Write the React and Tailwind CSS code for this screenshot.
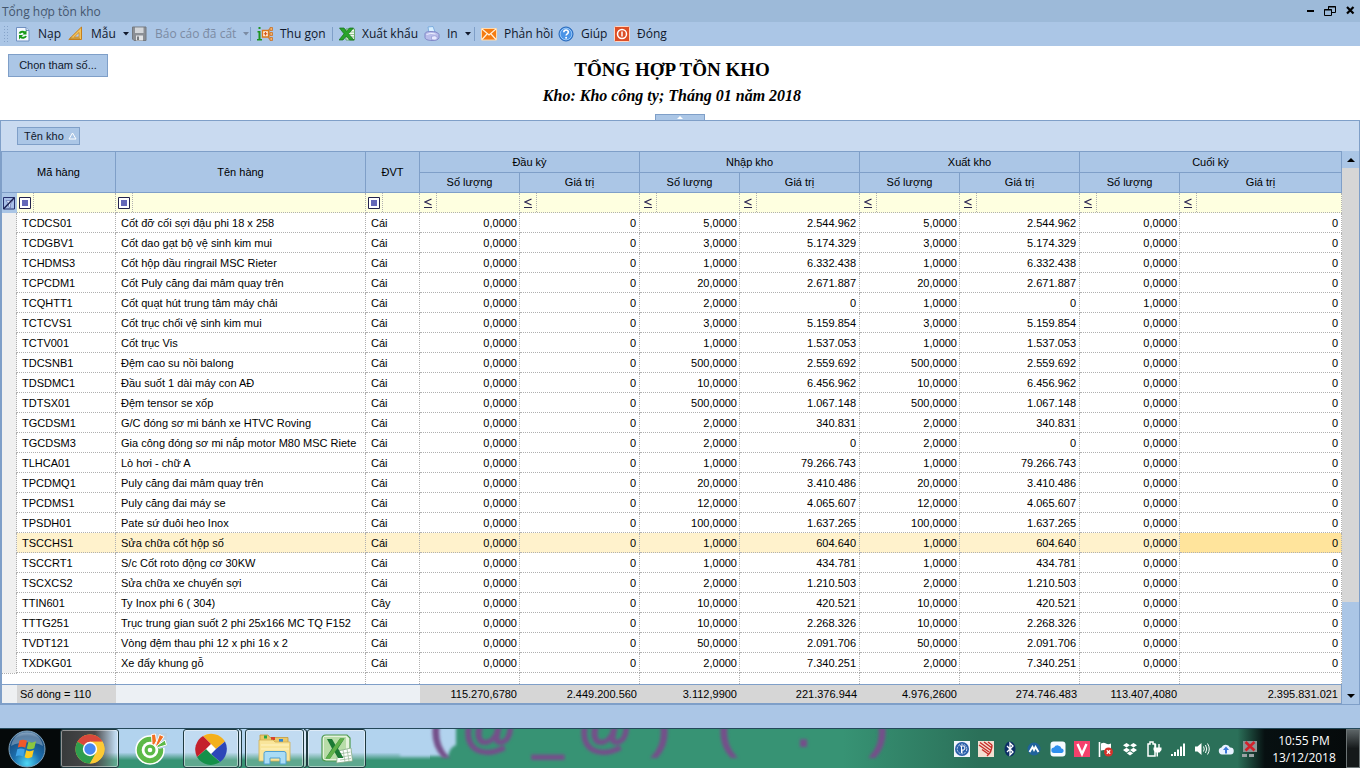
import React from "react";

const ROWS = [
  ["TCDCS01", "Cốt đỡ cối sợi đậu phi 18 x 258", "Cái", "0,0000", "0", "5,0000", "2.544.962", "5,0000", "2.544.962", "0,0000", "0"],
  ["TCDGBV1", "Cốt dao gạt bộ vệ sinh kim mui", "Cái", "0,0000", "0", "3,0000", "5.174.329", "3,0000", "5.174.329", "0,0000", "0"],
  ["TCHDMS3", "Cốt hộp dầu ringrail MSC Rieter", "Cái", "0,0000", "0", "1,0000", "6.332.438", "1,0000", "6.332.438", "0,0000", "0"],
  ["TCPCDM1", "Cốt Puly căng đai mâm quay trên", "Cái", "0,0000", "0", "20,0000", "2.671.887", "20,0000", "2.671.887", "0,0000", "0"],
  ["TCQHTT1", "Cốt quạt hút trung tâm máy chải", "Cái", "0,0000", "0", "2,0000", "0", "1,0000", "0", "1,0000", "0"],
  ["TCTCVS1", "Cốt trục chổi vệ sinh kim mui", "Cái", "0,0000", "0", "3,0000", "5.159.854", "3,0000", "5.159.854", "0,0000", "0"],
  ["TCTV001", "Cốt trục Vis", "Cái", "0,0000", "0", "1,0000", "1.537.053", "1,0000", "1.537.053", "0,0000", "0"],
  ["TDCSNB1", "Đệm cao su nồi balong", "Cái", "0,0000", "0", "500,0000", "2.559.692", "500,0000", "2.559.692", "0,0000", "0"],
  ["TDSDMC1", "Đầu suốt 1 dài máy con AĐ", "Cái", "0,0000", "0", "10,0000", "6.456.962", "10,0000", "6.456.962", "0,0000", "0"],
  ["TDTSX01", "Đệm tensor se xốp", "Cái", "0,0000", "0", "500,0000", "1.067.148", "500,0000", "1.067.148", "0,0000", "0"],
  ["TGCDSM1", "G/C đóng sơ mi bánh xe HTVC Roving", "Cái", "0,0000", "0", "2,0000", "340.831", "2,0000", "340.831", "0,0000", "0"],
  ["TGCDSM3", "Gia công đóng sơ mi nắp motor M80 MSC Riete", "Cái", "0,0000", "0", "2,0000", "0", "2,0000", "0", "0,0000", "0"],
  ["TLHCA01", "Lò hơi - chữ A", "Cái", "0,0000", "0", "1,0000", "79.266.743", "1,0000", "79.266.743", "0,0000", "0"],
  ["TPCDMQ1", "Puly căng đai mâm quay trên", "Cái", "0,0000", "0", "20,0000", "3.410.486", "20,0000", "3.410.486", "0,0000", "0"],
  ["TPCDMS1", "Puly căng đai máy se", "Cái", "0,0000", "0", "12,0000", "4.065.607", "12,0000", "4.065.607", "0,0000", "0"],
  ["TPSDH01", "Pate sứ đuôi heo Inox", "Cái", "0,0000", "0", "100,0000", "1.637.265", "100,0000", "1.637.265", "0,0000", "0"],
  ["TSCCHS1", "Sửa chữa cốt hộp số", "Cái", "0,0000", "0", "1,0000", "604.640", "1,0000", "604.640", "0,0000", "0"],
  ["TSCCRT1", "S/c Cốt roto động cơ 30KW", "Cái", "0,0000", "0", "1,0000", "434.781", "1,0000", "434.781", "0,0000", "0"],
  ["TSCXCS2", "Sửa chữa xe chuyển sợi", "Cái", "0,0000", "0", "2,0000", "1.210.503", "2,0000", "1.210.503", "0,0000", "0"],
  ["TTIN601", "Ty Inox phi 6 ( 304)", "Cây", "0,0000", "0", "10,0000", "420.521", "10,0000", "420.521", "0,0000", "0"],
  ["TTTG251", "Trục trung gian suốt 2 phi 25x166 MC TQ F152", "Cái", "0,0000", "0", "10,0000", "2.268.326", "10,0000", "2.268.326", "0,0000", "0"],
  ["TVDT121", "Vòng đệm thau phi 12 x phi 16 x 2", "Cái", "0,0000", "0", "50,0000", "2.091.706", "50,0000", "2.091.706", "0,0000", "0"],
  ["TXDKG01", "Xe đẩy khung gỗ", "Cái", "0,0000", "0", "2,0000", "7.340.251", "2,0000", "7.340.251", "0,0000", "0"],
];

const SELECTED = "TSCCHS1";

const TOTALS = ["115.270,6780", "2.449.200.560", "3.112,9900", "221.376.944", "4.976,2600", "274.746.483", "113.407,4080", "2.395.831.021"];

const GROUPS = ["Đầu kỳ", "Nhập kho", "Xuất kho", "Cuối kỳ"];

const COLUMNS = [
  "Mã hàng", "Tên hàng", "ĐVT",
  "Đầu kỳ số lượng", "Đầu kỳ giá trị",
  "Nhập kho số lượng", "Nhập kho giá trị",
  "Xuất kho số lượng", "Xuất kho giá trị",
  "Cuối kỳ số lượng", "Cuối kỳ giá trị",
];

/* ---------- toolbar icons ---------- */

function RefreshIcon() {
  return (
    <svg width="16" height="16" viewBox="0 0 16 16" fill="none">
      <path d="M1.500 1.500h9.500l3 3v10.500h-12.500z" fill="#f3f8ff" stroke="#6f8fc0" />
      <path d="M11 1.500v3h3" fill="#cfdff5" stroke="#6f8fc0" />
      <path d="M4.500 7.500c.8-2 4-2.500 5.300-.8" stroke="#179a17" strokeWidth="2" />
      <path d="M11.500 4v4.500H7.500z" fill="#179a17" />
      <path d="M11 10c-.8 2-4 2.500-5.300.8" stroke="#179a17" strokeWidth="2" />
      <path d="M4 13.500V9h4z" fill="#179a17" />
    </svg>
  );
}

function RulerIcon() {
  return (
    <svg width="16" height="16" viewBox="0 0 16 16">
      <path d="M13.500 1v12.500H.8z" fill="#f3c35b" stroke="#c47f1c" />
      <path d="M11 6.500V11H6.300z" fill="#b9cfee" stroke="#c47f1c" strokeWidth=".7" />
      <path d="M3 13v-1.500M5 13v-1.500M7 13v-1.500M9 13v-1.500M11 13v-1.500" stroke="#8d5a10" strokeWidth=".8" />
    </svg>
  );
}

function SaveIcon() {
  return (
    <svg width="16" height="16" viewBox="0 0 16 16">
      <path d="M.5 1h13.500v13.500H2L.5 13z" fill="#8b8f95" stroke="#75797f" />
      <path d="M3 1.500h8.500v5.500H3z" fill="#d3d6da" />
      <path d="M4 9.500h7v5H4z" fill="#e3e5e7" />
      <path d="M5 10.500h2v3.500H5z" fill="#777b80" />
    </svg>
  );
}

function CollapseIcon() {
  return (
    <svg width="16" height="16" viewBox="0 0 16 16" fill="none">
      <path d="M1.500 1h2v2h-2zM.5 5h3v8h1.500v1.500H0V13h1.500V6.500h-1z" fill="#1d9320" />
      <path d="M10 8h5.500M12 3v10M12 3h3.500M12 13h3.500" stroke="#d07a2a" />
      <path d="M5.500 4.500h6v6.500h-6z" fill="#fff3df" stroke="#d9781b" strokeWidth="1.300" />
      <path d="M8.500 6v3.500M6.800 7.750h3.500" stroke="#d8501b" strokeWidth="1.200" />
      <path d="M13 1.500h2.500v3H13zM13 6.500h2.500v3H13zM13 11.500h2.500v3H13z" fill="#f2b26a" stroke="#c8691a" strokeWidth=".7" />
    </svg>
  );
}

function ExcelIcon() {
  return (
    <svg width="16" height="16" viewBox="0 0 16 16">
      <path d="M7 3h8.500v11H7z" fill="#f4faf2" stroke="#4c9a4a" strokeWidth=".8" />
      <path d="M10 6h5M10 8.500h5M10 11h5" stroke="#78b574" strokeWidth=".8" />
      <path d="M.5 2h4.500l2.500 3.300L10.500 2h4l-5 5.800 5.500 6.200H10.500l-3.300-3.800L4 14H0l5-6.200z" fill="#2aa32a" stroke="#12701a" strokeWidth=".7" />
    </svg>
  );
}

function PrinterIcon() {
  return (
    <svg width="16" height="16" viewBox="0 0 16 16">
      <path d="M4 1l5-.5 2 5.500-6 1z" fill="#d8efff" stroke="#6fa5dc" strokeWidth=".8" />
      <path d="M1 8c0-2 3-2.500 6-2.500s7 .5 8 3v3.500c-1 2-4 2.500-7 2.500-3.500 0-7-1-7-3z" fill="#b9bdea" stroke="#7478be" strokeWidth=".8" />
      <path d="M2.500 8.500q4-2 9-.5" fill="none" stroke="#eef0ff" />
      <path d="M7.500 10.500q3-1.500 5.500 0v3q-3 1-5.500 0z" fill="#e8eaff" stroke="#8c90cf" strokeWidth=".6" />
    </svg>
  );
}

function MailIcon() {
  return (
    <svg width="16" height="16" viewBox="0 0 16 16">
      <path d="M.5 2.500h15v11.500H.5z" fill="#f47b12" stroke="#ffd9ab" />
      <path d="M1 3l7 6 7-6M1 13.500l5-5.500M15 13.500l-5-5.500" fill="none" stroke="#fff2dc" strokeWidth="1.200" />
    </svg>
  );
}

function HelpIcon() {
  return (
    <svg width="16" height="16" viewBox="0 0 16 16">
      <circle cx="8" cy="8" r="7" fill="#4a94e6" stroke="#2264b8" />
      <circle cx="8" cy="8" r="5.800" fill="none" stroke="#a7d0fa" strokeWidth=".8" />
      <path d="M5.800 6.300c0-3 4.600-3 4.600-.2 0 1.700-2.300 1.700-2.300 3.500" fill="none" stroke="#fff" strokeWidth="1.600" />
      <circle cx="8.100" cy="11.700" r="1" fill="#fff" />
    </svg>
  );
}

function PowerIcon() {
  return (
    <svg width="16" height="16" viewBox="0 0 16 16">
      <rect x=".5" y=".5" width="15" height="15" rx="1" fill="#dd4f27" stroke="#ffd6c2" />
      <circle cx="8" cy="8" r="4.500" fill="none" stroke="#fff" strokeWidth="1.500" />
      <path d="M8 5.500v5" stroke="#fff" strokeWidth="1.500" />
    </svg>
  );
}

const TOOLS = [
  { label: "Nạp", icon: RefreshIcon, width: "w-[53px]" },
  { label: "Mẫu", icon: RulerIcon, width: "w-16", menu: true },
  { label: "Báo cáo đã cất", icon: SaveIcon, width: "w-[118px]", menu: true, disabled: true },
  { label: "Thu gọn", icon: CollapseIcon, width: "w-[75px]", divided: true },
  { label: "Xuất khẩu", icon: ExcelIcon, width: "w-[85px]", divided: true },
  { label: "In", icon: PrinterIcon, width: "w-[50px]", menu: true },
  { label: "Phản hồi", icon: MailIcon, width: "w-[77px]", divided: true },
  { label: "Giúp", icon: HelpIcon, width: "w-14" },
  { label: "Đóng", icon: PowerIcon, width: "w-14" },
];

function Toolbar() {
  return (
    <div className="flex h-6 items-center bg-[#abc6e6] pl-1 font-['Open_Sans','Noto_Sans',sans-serif] text-xs">
      <svg width="11" height="18" viewBox="0 0 11 18" className="shrink-0" fill="#86a3c9">
        {[1, 4, 7, 10, 13, 16].map((y) => (
          <path key={y} d={`M0 ${y}h1v1h-1zM3 ${y}h1v1h-1z`} />
        ))}
      </svg>
      {TOOLS.map(({ label, icon: Icon, width, menu, divided, disabled }) => (
        <React.Fragment key={label}>
          {divided && <span className="mr-1.5 h-3.5 w-px shrink-0 bg-[#7f9fc8]" />}
          <button
            type="button"
            disabled={disabled}
            className={`flex h-6 shrink-0 items-center gap-[7px] whitespace-nowrap pr-[5px] ${width} ${disabled ? "text-[#7b8ba3]" : "text-[#10182c]"}`}
          >
            <span className="shrink-0"><Icon /></span>
            {label}
            {menu && (
              <svg width="6" height="4" viewBox="0 0 6 4" className="ml-auto shrink-0" fill="currentColor">
                <path d="M0 0h6L3 3.500z" />
              </svg>
            )}
          </button>
        </React.Fragment>
      ))}
    </div>
  );
}

function TitleBar() {
  return (
    <div className="flex h-[22px] items-center justify-between bg-[#9dbad9] pl-0.5 pr-1">
      <span className="pt-0.5 font-['Open_Sans','Noto_Sans',sans-serif] text-xs text-[#44566e]">Tổng hợp tồn kho</span>
      <div className="flex items-center gap-2 text-black">
        <button type="button" aria-label="Thu nhỏ">
          <svg width="12" height="12" viewBox="0 0 12 12"><path d="M3 5h7v2H3z" /></svg>
        </button>
        <button type="button" aria-label="Khôi phục">
          <svg width="12" height="12" viewBox="0 0 12 12" fill="none" stroke="#000">
            <path d="M4.500 4V1.500h7v6H8M4 2h8" />
            <path d="M.5 4.500h7v6h-7zM0 5h8" />
          </svg>
        </button>
        <button type="button" aria-label="Đóng cửa sổ">
          <svg width="12" height="12" viewBox="0 0 12 12"><path d="M3 2l6.500 6.500M9.500 2L3 8.500" stroke="#000" strokeWidth="2.200" /></svg>
        </button>
      </div>
    </div>
  );
}

/* ---------- grid ---------- */

const HEAD = "border-r border-b border-[#7f9fc8] bg-[#abc6e6] p-0 text-center font-normal";
const DOTTED = "border-r border-b border-dotted border-[#b0b0b0] p-0";

function FilterCell({ label, numeric }) {
  return (
    <td className={`${DOTTED} bg-[#feffe0]`}>
      <div className="flex h-[19px] items-stretch">
        <button
          type="button"
          aria-label={`Điều kiện lọc ${label}`}
          className="flex w-[17px] shrink-0 items-center justify-center border-r border-dotted border-[#b0b0b0]"
        >
          {numeric ? (
            <svg width="8" height="10" viewBox="0 0 8 10" fill="none" stroke="#2b2550" strokeWidth="1.200">
              <path d="M7.500 1L1 4l6.500 3M0 9.500h8" />
            </svg>
          ) : (
            <svg width="12" height="12" viewBox="0 0 12 12">
              <path d="M.5.5h11v11H.5z" fill="#fff" stroke="#23234d" />
              <path d="M3 3h6v6H3z" fill="#6468b8" />
            </svg>
          )}
        </button>
        <input aria-label={`Lọc ${label}`} className="min-w-0 flex-1 bg-transparent px-1 outline-none" />
      </div>
    </td>
  );
}

function StockTable() {
  return (
    <table className="w-full table-fixed border-separate border-spacing-0 border-t border-l border-[#7f9fc8] bg-white text-[11px] leading-[17px] text-black">
      <colgroup>
        <col className="w-[15px]" />
        <col className="w-[99px]" />
        <col className="w-[250px]" />
        <col className="w-[54px]" />
        <col className="w-[100px]" />
        <col className="w-[120px]" />
        <col className="w-[100px]" />
        <col className="w-[120px]" />
        <col className="w-[100px]" />
        <col className="w-[120px]" />
        <col className="w-[100px]" />
        <col />
      </colgroup>
      <thead>
        <tr className="h-[21px]">
          <th rowSpan={2} colSpan={2} className={HEAD}>Mã hàng</th>
          <th rowSpan={2} className={HEAD}>Tên hàng</th>
          <th rowSpan={2} className={HEAD}>ĐVT</th>
          {GROUPS.map((g) => (
            <th key={g} colSpan={2} className={HEAD}>{g}</th>
          ))}
        </tr>
        <tr className="h-5">
          {GROUPS.map((g) => (
            <React.Fragment key={g}>
              <th className={HEAD}>Số lượng</th>
              <th className={HEAD}>Giá trị</th>
            </React.Fragment>
          ))}
        </tr>
      </thead>
      <tbody>
        <tr className="h-5">
          <td className="bg-[#abc6e6] p-0">
            <button type="button" aria-label="Xóa lọc" className="flex h-5 w-full items-center">
              <svg width="14" height="13" viewBox="0 0 14 13" fill="none">
                <path d="M1.500.5h11v11.500h-11z" fill="#a8bfe8" stroke="#26306e" />
                <path d="M4 3.500h7L8.500 7v4L6.500 9.500V7z" fill="#dbe6fa" stroke="#5968a8" strokeWidth=".6" />
                <path d="M1.500 12l11-11.500" stroke="#1b1f50" strokeWidth="1.400" />
              </svg>
            </button>
          </td>
          {COLUMNS.map((c, i) => (
            <FilterCell key={c} label={c} numeric={i > 2} />
          ))}
        </tr>
        {ROWS.map((row) => {
          const selected = row[0] === SELECTED;
          return (
            <tr key={row[0]} className={`h-5 ${selected ? "bg-[#fff2cc]" : ""}`}>
              <td className="border-r border-dotted border-[#b0b0b0] bg-[#f0f0f0] p-0" />
              {row.map((value, i) => {
                // quantities sit one pixel closer to the rule than values
                let pad = "pl-[5px] text-left";
                if (i > 2) pad = i % 2 ? "pr-0.5 text-right" : "pr-[3px] text-right";
                return (
                  <td
                    key={i}
                    className={`${DOTTED} pt-0.5 ${pad} overflow-hidden whitespace-nowrap ${selected && i === 10 ? "bg-[#ffe49c]" : ""}`}
                  >
                    {value}
                  </td>
                );
              })}
            </tr>
          );
        })}
        <tr className="h-[11px]">
          <td className="border-t border-dotted border-[#b0b0b0] p-0" />
          {COLUMNS.map((c) => (
            <td key={c} className="border-r border-dotted border-[#b0b0b0] p-0" />
          ))}
        </tr>
      </tbody>
      <tfoot>
        <tr className="h-5">
          <td className="border-y border-[#7f9fc8] bg-[#eef0f2] p-0" />
          <td className="border-y border-[#7f9fc8] bg-[#d6d6d6] p-0 pl-[3px]">Số dòng = 110</td>
          <td colSpan={2} className="border-y border-[#7f9fc8] bg-[#ecf0f4] p-0" />
          {TOTALS.map((t, i) => (
            <td key={t} className={`border-y border-[#7f9fc8] bg-[#d6d6d6] p-0 pr-[3px] text-right ${i === 7 ? "border-r" : ""}`}>
              {t}
            </td>
          ))}
        </tr>
      </tfoot>
    </table>
  );
}

function ScrollBar() {
  return (
    <div className="flex w-[17px] shrink-0 flex-col bg-[#abc6e6]">
      <button type="button" aria-label="Cuộn lên" className="flex h-[17px] items-center justify-center">
        <svg width="8" height="4" viewBox="0 0 8 4"><path d="M0 4l4-4 4 4z" /></svg>
      </button>
      <div className="grow-[434] bg-[#d6d6d6]" />
      <div className="grow-[85]" />
      <button type="button" aria-label="Cuộn xuống" className="flex h-[17px] items-center justify-center">
        <svg width="8" height="4" viewBox="0 0 8 4"><path d="M0 0h8L4 4z" /></svg>
      </button>
    </div>
  );
}

/* ---------- taskbar ---------- */

function StartOrb() {
  return (
    <svg width="38" height="38" viewBox="0 0 38 38">
      <defs>
        <radialGradient id="orb" cx=".5" cy=".9" r=".95">
          <stop offset="0" stopColor="#4fd8f5" />
          <stop offset=".4" stopColor="#1c6fae" />
          <stop offset=".8" stopColor="#174a7c" />
          <stop offset="1" stopColor="#8fb0cc" />
        </radialGradient>
      </defs>
      <circle cx="19" cy="19" r="18" fill="url(#orb)" stroke="#7fa3bd" />
      <path d="M3 16C5 5 13 2.500 19 2.500S33 5 35 16c-9-5-23-5-32 0z" fill="#fff" opacity=".3" />
      <path d="M11.500 10.500c2.500-1.200 5-1 7.500.3l-1.700 7c-2.500-1.300-5-1.400-7.500-.2z" fill="#f0592b" />
      <path d="M20.500 11.500c2.500 1.200 5 1.200 7.500-.2l-1.700 7c-2.500 1.300-5 1.400-7.500.2z" fill="#8cc63e" />
      <path d="M9.300 19.300c2.500-1.200 5-1 7.500.3l-1.700 7c-2.500-1.300-5-1.400-7.500-.2z" fill="#3fa4e8" />
      <path d="M18.300 20.300c2.500 1.200 5 1.200 7.500-.2l-1.700 7c-2.500 1.300-5 1.400-7.500.2z" fill="#ffcb1f" />
    </svg>
  );
}

function ChromeIcon() {
  return (
    <svg width="30" height="30" viewBox="0 0 30 30">
      <circle cx="15" cy="15" r="14.500" fill="#fcc934" />
      <path d="M15 15L2.440 7.750A14.500 14.500 0 0 1 27.560 7.750H15z" fill="#d9483b" />
      <path d="M2.440 7.750A14.500 14.500 0 0 0 15 29.500l6.280-10.880z" fill="#2f9e4f" />
      <path d="M15 7.750h12.560A14.500 14.500 0 0 1 15 29.500l6.280-10.880z" fill="#fcc934" />
      <circle cx="15" cy="15" r="7.200" fill="#fff" />
      <circle cx="15" cy="15" r="5.700" fill="#4688f1" />
    </svg>
  );
}

function CocCocIcon() {
  return (
    <svg width="32" height="32" viewBox="0 0 32 32" fill="none">
      <circle cx="15" cy="17" r="14" fill="#5cb947" stroke="#fff" strokeWidth="1.500" />
      <circle cx="15" cy="17" r="8.300" fill="#fff" />
      <circle cx="15" cy="17" r="5.500" fill="#5cb947" />
      <circle cx="15" cy="17" r="2.300" fill="#fff" />
      <path d="M16 0h16v14l-8 2-7-7z" fill="#b4cfe3" />
      <path d="M16.500 1.500l4-.5 1 7-2.500 4.500-2-2z" fill="#f36f21" stroke="#fff" />
      <path d="M24.500 1.500l4.500 2-6 9-3 1.500z" fill="#f36f21" stroke="#fff" />
      <path d="M30 7l1.500 5-8.500 2.500-1.500-1.500z" fill="#5cb947" stroke="#fff" />
    </svg>
  );
}

function MisaIcon() {
  return (
    <svg width="34" height="34" viewBox="0 0 34 34">
      <circle cx="17" cy="17" r="15" fill="#fff" />
      <path d="M17 12L9 4A16 16 0 0 1 31 9.500L22 17z" fill="#f4b01c" />
      <path d="M22 17l9-7.500A16 16 0 0 1 26 30l-9-8z" fill="#2d47b8" />
      <path d="M17 22l9 8A16 16 0 0 1 3 25l9-8z" fill="#15904a" />
      <path d="M12 17l-9 8A16 16 0 0 1 9 4l8 8z" fill="#c4202c" />
      <path d="M17 12.500l4.500 4.500-4.500 4.500-4.500-4.500z" fill="#fff" />
    </svg>
  );
}

function ExplorerIcon() {
  return (
    <svg width="34" height="32" viewBox="0 0 34 32">
      <path d="M2 2h8l2 2.500h18V27H2z" fill="#e9c96a" stroke="#c39b3d" strokeWidth=".8" />
      <path d="M6 2.500h3v3H6z" fill="#27a844" />
      <path d="M13 4h4v3h-4z" fill="#d8432c" />
      <path d="M21 6h4v3h-4z" fill="#2f86d8" />
      <path d="M1 7h14l2 2h15v19H1z" fill="#f9e59a" stroke="#d3b050" strokeWidth=".8" />
      <path d="M3 12h28M3 16h28" stroke="#fff4c4" />
      <path d="M6 31V20.500q0-2 2-2h18q2 0 2 2V31h-6v-6H12v6z" fill="#a9dcf5" stroke="#4f9fd0" />
    </svg>
  );
}

function ExcelAppIcon() {
  return (
    <svg width="32" height="30" viewBox="0 0 32 30">
      <path d="M5 1h21l3 3v23H5q-4 0-4-4V5q0-4 4-4z" fill="#e5f2dc" stroke="#4e9a4f" strokeWidth="1.200" />
      <path d="M3 3h22v22H3z" fill="#b8dca8" />
      <path d="M17 17l13-3 1.500 13-16 2z" fill="#fdfefd" stroke="#86ac86" strokeWidth=".8" />
      <path d="M18.500 20l11-2M19 23l11-1.500M19 26l11-1.500M22 16l2 12M26 15l2 12" stroke="#9dbd9d" strokeWidth=".8" />
      <path d="M6 5h5l3.500 6L19 4.500h4.500L17 14.500 22.500 24h-5.500l-3.500-6-4.500 6.500H4.500L11 14.500z" fill="#1c7a35" />
      <path d="M19 4.500h4.500L9 24.500H4.500z" fill="#5fb04a" />
    </svg>
  );
}

const FRAME = "border border-[#1f3a40] bg-white/20 shadow-[inset_0_0_0_1px_rgba(255,255,255,0.45)]";

const TASKS = [
  { label: "Google Chrome", icon: ChromeIcon, style: `w-[59px] ${FRAME}` },
  { label: "Cốc Cốc", icon: CocCocIcon, style: "w-16" },
  { label: "MISA", icon: MisaIcon, style: `w-14 ${FRAME}`, stacked: true },
  { label: "Windows Explorer", icon: ExplorerIcon, style: `ml-[3px] w-[59px] ${FRAME}`, stacked: true },
  { label: "Microsoft Excel", icon: ExcelAppIcon, style: `w-[59px] ${FRAME}` },
];

const TRAY = [
  {
    label: "Bộ gõ",
    art: <><path d="M0 0h16v16H0z" fill="#f2f6fb" /><circle cx="8" cy="8" r="7" fill="#2a5fa8" /><circle cx="8" cy="8" r="4.800" fill="none" stroke="#cfe0f5" strokeDasharray="2 1" /><path d="M6 5h4q2 2 0 4H8v3M7.500 5v7" fill="none" stroke="#fff" /></>,
  },
  {
    label: "Từ điển",
    art: <><path d="M0 0h16v16H0z" fill="#f3dfd2" /><path d="M1 4l10 7M2 1.500l11 8M6 1l8 6M4 8.500l7 5M10 1l4 3M14 4q0 7-5 11" fill="none" stroke="#c62c27" strokeWidth="1.400" /></>,
  },
  {
    label: "Bluetooth",
    art: <><ellipse cx="8" cy="8" rx="5.500" ry="7.500" fill="#0c2f66" /><path d="M5 5l6 6-3 3V2l3 3-6 6" fill="none" stroke="#fff" strokeWidth="1.300" /></>,
  },
  {
    label: "Malwarebytes",
    art: <><circle cx="8" cy="8" r="6.500" fill="#1e5fb3" opacity=".75" /><path d="M3.500 11L6.500 6 8 9l1.500-3 3 5" fill="none" stroke="#fff" strokeWidth="1.900" /></>,
  },
  {
    label: "iCloud",
    art: <><rect x=".5" y=".5" width="15" height="15" rx="3" fill="#f5faff" /><path d="M4 12a2.700 2.700 0 0 1 0-5.400A4 4 0 0 1 11.500 7.500 2.300 2.300 0 0 1 12 12z" fill="#2e8fee" /></>,
  },
  {
    label: "V",
    art: <><path d="M0 0h16v16H0z" fill="#f5416c" /><path d="M3.500 3l4.500 10 4.500-10" fill="none" stroke="#fff" strokeWidth="2.400" /></>,
  },
  {
    label: "Trung tâm hành động",
    art: <><path d="M1.500 1v15" stroke="#fff" strokeWidth="1.600" /><path d="M3 2.500q3-1.500 5 0t5 0v7q-3 1.200-5 0t-5 0z" fill="#fff" /><circle cx="10.500" cy="11" r="4.500" fill="#d5322a" /><path d="M8.800 9.300l3.400 3.400M12.200 9.300l-3.400 3.400" stroke="#fff" strokeWidth="1.300" /></>,
  },
  {
    label: "Dropbox",
    art: <path d="M4.500 2L8 4.300 4.500 6.600 1 4.300zM11.500 2L15 4.300l-3.500 2.300L8 4.300zM4.500 6.800L8 9.100l-3.500 2.300L1 9.100zM11.500 6.800L15 9.100l-3.500 2.300L8 9.100zM8 10.200l3.200 2.100L8 14.400l-3.200-2.100z" fill="#fff" />,
  },
  {
    label: "Nguồn điện",
    art: <><path d="M2 3h2V1h3v2h2v12H2z" fill="none" stroke="#fff" strokeWidth="1.500" /><path d="M9.500 3v4M13 3v4" stroke="#fff" strokeWidth="1.400" /><path d="M7.500 6.500h8v2.500l-2 2.500H9.500l-2-2.500zM10.500 11h1.500v4.500h-1.500z" fill="#fff" /></>,
  },
  {
    label: "Mạng",
    art: <path d="M1 13h2v2H1zM4 11h2v4H4zM7 8.500h2V15H7zM10 5.500h2V15h-2zM13 2.500h2V15h-2z" fill="#fff" />,
  },
  {
    label: "Âm lượng",
    art: <><path d="M1 5.500h2.500L7.500 2v12L3.500 10.500H1z" fill="#fff" /><path d="M9.500 5.500q1.500 2.500 0 5M11.500 4q2.500 4 0 8M13.500 2.500q3.500 5.500 0 11" fill="none" stroke="#fff" /></>,
  },
  {
    label: "Sao lưu",
    art: <><path d="M4 13.500a3.500 3.500 0 0 1-.5-6.900A4.600 4.600 0 0 1 12 6.500a3.500 3.500 0 0 1 .5 7z" fill="#e9f2ff" /><path d="M8 5.500l3 3.500H9v3.500H7V9H5z" fill="#3b78d8" /></>,
  },
  {
    label: "Mất kết nối",
    art: <><path d="M1 0h14v11H1z" fill="#8c9495" /><path d="M0 13h5v3H0zM7 13h5v3H7z" fill="#9aa2a3" /><path d="M3.500 1l9 8.500M12.500 1l-9 8.500" stroke="#d3202a" strokeWidth="2.600" /></>,
  },
];

// the desktop picture showing through the glass of the bar
function Wallpaper() {
  return (
    <svg aria-hidden="true" width="960" height="39" viewBox="0 0 960 39" className="absolute left-0 top-0">
      <defs>
        <filter id="soft" x="-10%" y="-50%" width="120%" height="200%"><feGaussianBlur stdDeviation="1.500" /></filter>
      </defs>
      <path d="M400-6h56v22q-6 2-8 11h-48z" fill="#b2d3ee" filter="url(#soft)" />
      <g
        filter="url(#soft)"
        fill="#75508a"
        stroke="#75508a"
        strokeWidth="2"
        fontFamily="Liberation Sans, sans-serif"
        fontSize="54"
      >
        <text x="430" y="17">(</text>
        <text x="462" y="17">@</text>
        <text x="533" y="19">_</text>
        <text x="578" y="17">@</text>
        <text x="652" y="17">)</text>
        <text x="718" y="17">(</text>
        <text x="796" y="17">.</text>
        <text x="870" y="17">)</text>
      </g>
    </svg>
  );
}

function Taskbar() {
  return (
    <footer className="relative flex h-10 items-stretch overflow-hidden border-t border-[#24485a] bg-[linear-gradient(90deg,#379374_0%,#379374_62%,#2b7059_72%,#2b7059_91%,#071011_93%,#05090a_100%)]">
      <div className="flex w-[430px] shrink-0 items-stretch bg-[linear-gradient(90deg,#05090a_0,#05090a_60px,#1c1c1e_95px,transparent_116px),linear-gradient(180deg,#b2d3ee_0,#b2d3ee_60%,#379374_80%)]">
        <button type="button" aria-label="Start" className="relative flex w-[60px] items-center pl-2">
          <StartOrb />
        </button>
        {TASKS.map(({ label, icon: Icon, style, stacked }) => (
          <React.Fragment key={label}>
            <button type="button" aria-label={label} className={`flex shrink-0 items-center justify-center rounded-[3px] ${style}`}>
              <Icon />
            </button>
            {stacked && <span className="w-[3px] rounded-r-[3px] border-y border-r border-[#1f3a40] bg-white/50" />}
          </React.Fragment>
        ))}
      </div>
      <Wallpaper />
      <div className="relative ml-auto flex items-center gap-2">
        {TRAY.map(({ label, art }) => (
          <button type="button" key={label} aria-label={label}>
            <svg width="16" height="16" viewBox="0 0 16 16">{art}</svg>
          </button>
        ))}
      </div>
      <div className="relative flex w-[88px] flex-col items-center justify-center pl-1 font-['Open_Sans','Noto_Sans',sans-serif] text-xs leading-[17px] text-white">
        <span>10:55 PM</span>
        <span>13/12/2018</span>
      </div>
      <button type="button" aria-label="Hiện màn hình nền" className="relative w-3.5 border border-[#6c7475] bg-[linear-gradient(180deg,#5c6466_0,#15191a_50%)]" />
    </footer>
  );
}

export default function App() {
  return (
    <div className="flex min-h-screen flex-col bg-white font-['Liberation_Sans',Arial,sans-serif]">
      <TitleBar />
      <Toolbar />
      <header className="relative h-[74px] bg-white">
        <button type="button" className="absolute left-2 top-2 h-[23px] w-[100px] border border-[#7f9fc8] bg-[#abc6e6] text-[11px] text-[#10182c]">
          Chọn tham số...
        </button>
        <div className="pr-4 pt-3 text-center font-['Liberation_Serif',serif] font-bold text-black">
          <h1 className="text-[19px] leading-6">TỔNG HỢP TỒN KHO</h1>
          <p className="pt-0.5 text-base leading-6 italic">Kho: Kho công ty; Tháng 01 năm 2018</p>
        </div>
        <button
          type="button"
          aria-label="Ẩn phần đầu"
          className="absolute bottom-0 left-1/2 flex h-1.5 w-[50px] -translate-x-1/2 items-center justify-center border border-b-0 border-[#7f9fc8] bg-[#abc6e6]"
        >
          <svg width="6" height="3" viewBox="0 0 6 3" fill="#fff"><path d="M0 3l3-3 3 3z" /></svg>
        </button>
      </header>
      <main className="flex-1 bg-[#abc6e6]">
        <section className="border border-[#7f9fc8]">
          <div className="flex h-[30px] items-center bg-[#c9daf0] pl-4">
            <button type="button" className="flex h-[18px] items-center gap-1 border border-[#7f9fc8] bg-[#abc6e6] pr-0.5 pl-1.5 text-[11px] text-[#10182c]">
              Tên kho
              <svg width="9" height="8" viewBox="0 0 9 8" fill="none"><path d="M4.500 1L8 7H1z" stroke="#fff" /></svg>
            </button>
          </div>
          <div className="flex">
            <div className="min-w-0 flex-1"><StockTable /></div>
            <ScrollBar />
          </div>
        </section>
      </main>
      <Taskbar />
    </div>
  );
}
